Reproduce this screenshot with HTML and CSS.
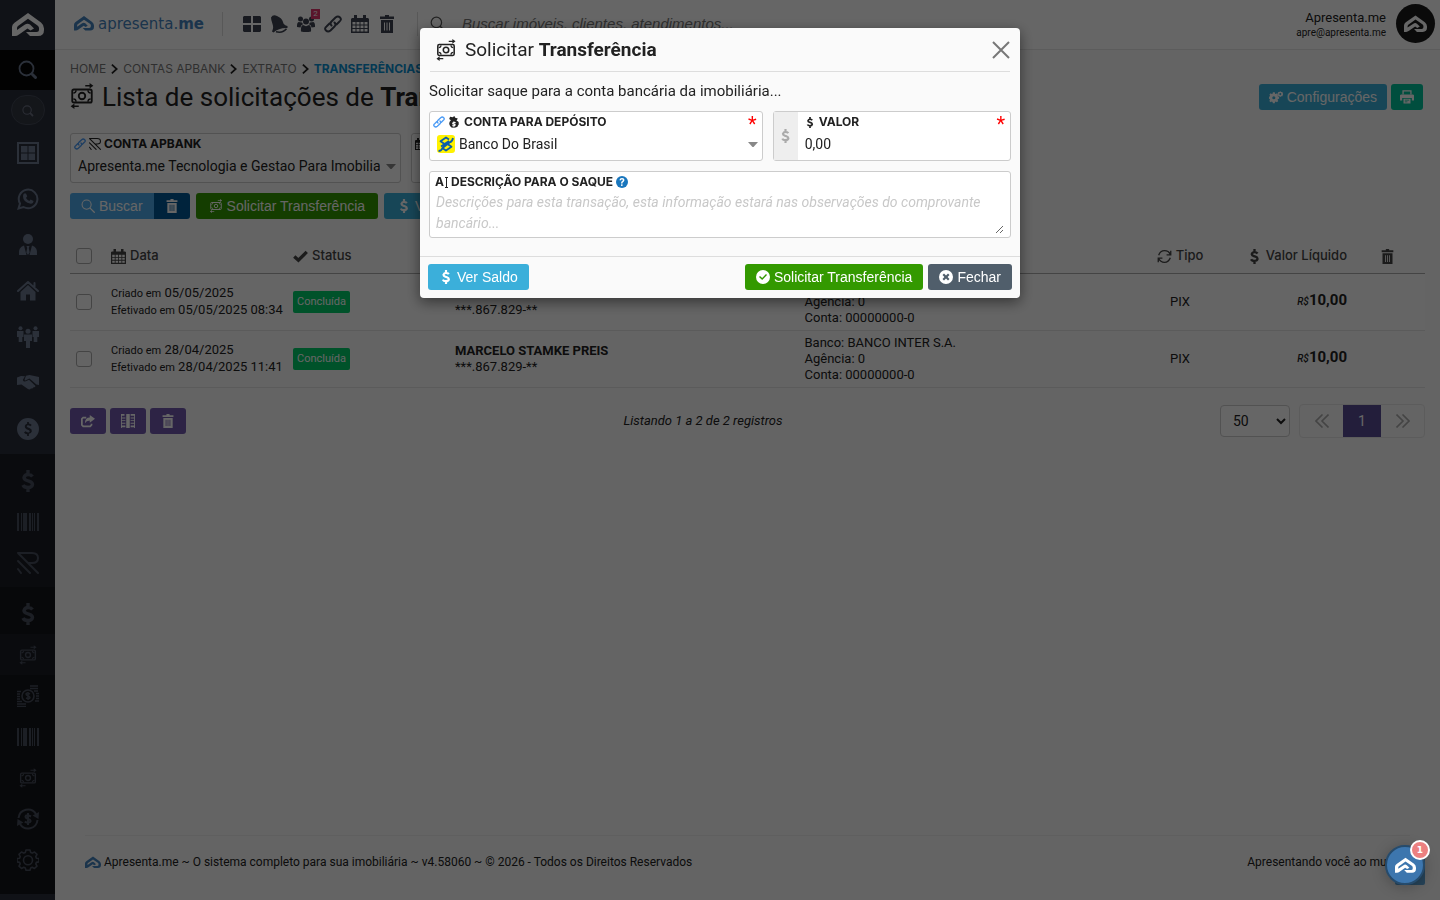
FILE: index.html
```html
<!DOCTYPE html>
<html lang="pt-BR">
<head>
  <meta charset="UTF-8">
  <meta name="viewport" content="width=device-width, initial-scale=1.0">
  <title>Transferências - Apresenta.me</title>
  <link rel="stylesheet" href="styles.css">
</head>
<body>
  <svg class="sprite" aria-hidden="true">
    <symbol id="i-logo" viewBox="0 0 32 24"><path fill="currentColor" d="M16 0 29 9.500Q32 12 32 15.500V17Q32 23 26 23H18L14 19H24.500Q27 19 27 16.500V15Q27 13.500 25.500 12.500L16 5.800 6 13Q5 13.800 5 15V17L13 11.500Q15.500 9.800 18 11.500L22 15.500 18.500 17.500 15.500 15.500 7 21.500Q5 23 3 23H0V14Q0 11.500 2.500 9.700Z"/></symbol>
    <symbol id="i-search" viewBox="0 0 20 20"><circle cx="8.500" cy="8.500" r="7" fill="none" stroke="currentColor" stroke-width="1.800"/><path d="m14.500 14.500 3 3" stroke="currentColor" stroke-width="3" stroke-linecap="round"/></symbol>
    <symbol id="i-search-thin" viewBox="0 0 20 20"><circle cx="8" cy="8" r="6.500" fill="none" stroke="currentColor" stroke-width="1.500"/><path d="m13 13 6 6" stroke="currentColor" stroke-width="1.800" stroke-linecap="round"/></symbol>
    <symbol id="i-window" viewBox="0 0 22 22"><path fill="none" stroke="currentColor" stroke-width="2" d="M1 1h20v20H1z"/><path fill="currentColor" d="M4 4h6.500v6.500H4zM11.500 4H18v6.500h-6.500zM4 11.500h6.500V18H4zM11.500 11.500H18V18h-6.500z"/></symbol>
    <symbol id="i-whats" viewBox="0 0 22 22"><path fill="none" stroke="currentColor" stroke-width="2" d="M1.500 20.500 3 15.500A9.300 9.300 0 1 1 6.500 19Z"/><path fill="currentColor" d="M7 5.500h2l1.200 2.800L9 10q1.200 2.200 3.300 3l1.300-1.500 2.900 1.400q0 2.500-2.700 2.800Q6 14.500 6 8.300 6 6.500 7 5.500Z"/></symbol>
    <symbol id="i-user" viewBox="0 0 20 22"><circle cx="10" cy="5" r="5" fill="currentColor"/><path fill="currentColor" d="M6 11.500 8.500 21H1q-1-8 5-9.500ZM14 11.500 11.500 21H19q1-8-5-9.500ZM8.500 12h3l-.7 2 .9 4.500L10 21l-1.700-2.500.9-4.500Z"/></symbol>
    <symbol id="i-home" viewBox="0 0 22 20"><path fill="none" stroke="currentColor" stroke-width="2" stroke-linecap="round" stroke-linejoin="round" d="m1 10 10-9 10 9M17.500 2v4"/><path fill="currentColor" d="M11 4 3.500 11v8.500h5.500v-6h4v6h5.500V11Z"/></symbol>
    <symbol id="i-people" viewBox="0 0 22 22"><g fill="currentColor"><circle cx="3.500" cy="2.200" r="2"/><circle cx="18.500" cy="2.200" r="2"/><circle cx="11" cy="5.200" r="2.500"/><path d="M0 5h6.500v6H5.300v5H1.700v-5H0zM15.500 5H22v6h-1.700v5h-3.600v-5h-1.200zM7 8.500h8V15h-2v7H9v-7H7z"/></g></symbol>
    <symbol id="i-hands" viewBox="0 0 22 16"><path fill="currentColor" d="M0 2.500 4 1l4 .3L5.800 5q1 2.700 4.200.8l2-1.100 6.500 6.200q-.5 1.800-2 1.300-.8 1.900-2.600 1.200-1.200 1.800-3 .6L4.500 9.500 0 10ZM9 .8 12.500 0l6 1.200L22 2v8l-2.600-.4-7-6.200-4 2.100q-1 0-.8-1.200Z"/></symbol>
    <symbol id="i-coin" viewBox="0 0 22 22"><path fill="currentColor" fill-rule="evenodd" d="M11 0a11 11 0 1 0 0 22 11 11 0 0 0 0-22Zm-.9 4h1.800v1.500q2 .2 2.800 1.500l-1.400 1.300q-1.600-1.500-3.200-.8-.9 1 .4 1.700l2.400 1q2.300 1 1.900 3.300-.5 1.900-2.900 2.300V18h-1.800v-1.700Q8 16 7 14.600l1.500-1.300q1.800 1.700 3.700.9 1.200-1-.2-1.900l-2.500-1Q7.400 10 7.800 8q.5-1.900 2.300-2.300Z"/></symbol>
    <symbol id="i-dollar" viewBox="0 0 12 22"><path fill="none" stroke="currentColor" stroke-width="3.400" d="M10.500 6.500Q9 4.500 6 4.500T2 7.500q0 2 3 3l2.500.8q3 1 3 3.200Q10 17.500 6 17.500T1 15M6 0v5M6 17v5"/></symbol>
    <symbol id="i-barcode" viewBox="0 0 22 18"><path fill="currentColor" d="M0 0h2v18H0zM4 0h1v18H4zM6 0h4v18H6zM12 0h2v18h-2zM15 0h1v18h-1zM17 0h1v18h-1zM20 0h2v18h-2z"/></symbol>
    <symbol id="i-real" viewBox="0 0 22 22"><path fill="none" stroke="currentColor" stroke-width="2" stroke-linecap="round" stroke-linejoin="round" d="M1 1h14q6 0 6 5t-6 5h-4M1 1l20 20M1 9l12 12M1 17l3 4"/></symbol>
    <symbol id="i-cash" viewBox="0 0 22 24"><rect x="2" y="6" width="18" height="12" rx="1.500" fill="none" stroke="currentColor" stroke-width="1.700"/><circle cx="11" cy="12" r="3" fill="none" stroke="currentColor" stroke-width="1.700"/><path fill="none" stroke="currentColor" stroke-width="1.300" d="M3 9.300q2.500 0 2.500-2.500M19 9.300q-2.500 0-2.500-2.500M3 14.700q2.500 0 2.500 2.500M19 14.700q-2.500 0-2.500 2.500M14 2.500h5M8 21.500H3"/><path fill="currentColor" d="m18 0 3.500 2.500L18 5ZM4 19v5l-3.500-2.500Z"/></symbol>
    <symbol id="i-coins" viewBox="0 0 22 22"><circle cx="11" cy="11" r="6" fill="none" stroke="currentColor" stroke-width="1.600"/><path fill="none" stroke="currentColor" stroke-width="1.600" d="M13 1h8M13 3.500h8M17 6h4M19 8.500h3M19 11h3M19 13.500h3M18 16h4M0 6.500h4M0 9h3M0 11.500h3M0 14h3M0 16.500h5M0 19h9M0 21.500h9"/><path fill="none" stroke="currentColor" stroke-width="1.500" d="M13 9q-3.500-2-4 0 0 1 2 1.800t2 2q-.7 1.800-4 .2M11 7v8"/></symbol>
    <symbol id="i-cycle" viewBox="0 0 22 22"><path fill="none" stroke="currentColor" stroke-width="2" d="M1.500 10A9.500 9.500 0 0 1 19 6M20.500 12A9.500 9.500 0 0 1 3 16"/><path fill="currentColor" d="m22 4-.5 7-6-3.500ZM0 18l.5-7 6 3.500Z"/><path fill="none" stroke="currentColor" stroke-width="2" d="M14 8.500q-5-2.500-5.500 0 0 1.500 2.500 2.300t2.700 2.300q-.7 2.700-6 .6M11 5v12"/></symbol>
    <symbol id="i-gear" viewBox="0 0 22 22"><path fill="none" stroke="currentColor" stroke-width="1.600" stroke-linejoin="round" d="M9 1h4l.7 2.500 1.500.6L17.500 3 20 5.300l-1.200 2.400.6 1.500L22 9.500v3.400l-2.600.5-.6 1.500L20 17.200 17.400 19.500l-2.200-1.200-1.500.6L13 21.300H9l-.7-2.400-1.500-.6-2.300 1.200L2 17.200l1.200-2.300-.6-1.500L0 12.900V9.500l2.600-.3.600-1.500L2 5.300 4.500 3l2.300 1.100 1.500-.6Z"/><circle cx="11" cy="11.200" r="4.500" fill="none" stroke="currentColor" stroke-width="1.600"/></symbol>
    <symbol id="i-tiles" viewBox="0 0 18 16"><path fill="currentColor" d="M1 0h7v7H0V1zM10 0h7l1 1v6h-8zM0 9h8v7H1l-1-1zM10 9h8v6l-1 1h-7z"/></symbol>
    <symbol id="i-bell" viewBox="0 0 18 18"><path fill="currentColor" d="M1 2.500Q3-1 7 1q5 2 6 6 .5 3 4.500 4v2Q9 12.500 3.500 17.500L2 16.500Q4 13 2.500 9 1 5 1 2.500Z"/><path fill="none" stroke="currentColor" stroke-width="1.500" d="M6 16.800q7 1.500 10.500-3"/></symbol>
    <symbol id="i-group" viewBox="0 0 18 16"><g fill="currentColor"><circle cx="9" cy="5.500" r="3"/><circle cx="3.500" cy="3" r="2.500"/><circle cx="14.500" cy="3" r="2.500"/><path d="M4 15.500Q3.500 10 6 9l3 1.200L12 9q2.500 1 2 6.500-5 1-10 0ZM0 11Q-.3 7 1.500 6L5 6.500l1 1.700Q3.500 9 3.500 11.500ZM18 11q.3-4-1.500-5l-3.500.5-1 1.700q2.500.8 2.500 3.300Z"/></g></symbol>
    <symbol id="i-link" viewBox="0 0 18 18"><path fill="none" stroke="currentColor" stroke-width="2" stroke-linecap="round" d="M7.500 10.500q-2-2 0-4l4-4Q14 .500 16 2.500T15.500 6.500l-3 3M10.500 7.500q2 2 0 4l-4 4Q4 17.500 2 15.500T2.500 11.500l3-3"/></symbol>
    <symbol id="i-cal" viewBox="0 0 18 18"><path fill="currentColor" fill-rule="evenodd" d="M1 3h2V0h3v3h6V0h3v3h2l1 1v14H0V4ZM1.500 7v2.500h3V7Zm4 0v2.500h3V7Zm4 0v2.500h3V7Zm4 0v2.500h3V7Zm-12 3.500V13h3v-2.500Zm4 0V13h3v-2.500Zm4 0V13h3v-2.500Zm4 0V13h3v-2.500ZM1.500 14v2.500h3V14Zm4 0v2.500h3V14Zm4 0v2.500h3V14Zm4 0v2.500h3V14Z"/></symbol>
    <symbol id="i-trash" viewBox="0 0 14 18"><path fill="currentColor" fill-rule="evenodd" d="M5 0h4v1.500h5V4H0V1.500h5ZM1 5h12v13H1Zm3 2.500v8h1v-8Zm2.500 0v8h1v-8Zm2.500 0v8h1v-8Z"/></symbol>
    <symbol id="i-check" viewBox="0 0 18 14"><path fill="none" stroke="currentColor" stroke-width="4" d="m1.500 7 5 4.500L16.500 1.500"/></symbol>
    <symbol id="i-sync" viewBox="0 0 18 18"><path fill="none" stroke="currentColor" stroke-width="1.600" d="M2 7.500Q4 2 9 2t7 4.500M16 10.500Q14 16 9 16t-7-4.500M16.500 2v5h-5M1.500 16v-5h5"/></symbol>
    <symbol id="i-gears" viewBox="0 0 18 14"><path fill="currentColor" fill-rule="evenodd" d="M5 1h2.400l.4 1.700 1 .5 1.500-.9L12 4l-.9 1.500.4 1 1.500.4v2.300l-1.500.4-.5 1 .9 1.500-1.700 1.700-1.500-.9-1 .5L7.400 15H5l-.4-1.600-1-.5-1.500.9L.400 12.100l.9-1.500-.4-1L-.500 9.200V6.900L.900 6.500l.5-1L.500 4l1.600-1.700 1.500.9 1-.5ZM6.200 6a2 2 0 1 0 0 4 2 2 0 0 0 0-4ZM14.500-.500l1.200 1.100 1.600-.1.300 1.600 1 1.200-1 1.200-.3 1.500-1.600.1-1.200 1-1.300-1-1.500-.1.100-1.600-1-1.100 1-1.200-.1-1.600 1.600.1Zm0 2.500a1.300 1.300 0 1 0 0 2.600 1.300 1.300 0 0 0 0-2.600Z"/></symbol>
    <symbol id="i-print" viewBox="0 0 16 16"><path fill="none" stroke="currentColor" stroke-width="1.500" d="M3.500 5V1h9v4"/><path fill="currentColor" fill-rule="evenodd" d="M1 5h14l1 1v6h-2.500V9h-11v3H0V6Zm3 5h8v5.500H4Zm1.500 1v1h5v-1Zm0 2v1h3v-1Z"/></symbol>
    <symbol id="i-share" viewBox="0 0 16 14"><path fill="none" stroke="currentColor" stroke-width="2" d="M6 3H2.500L1 4.500v7L2.500 13h8l1.500-1.500V10"/><path fill="currentColor" d="M10 0l6 4.500L10 9V6.500Q6 6.500 4.500 9.500 4.500 3 10 3Z"/></symbol>
    <symbol id="i-sheet" viewBox="0 0 16 16"><path fill="currentColor" d="M1 0h3v2H1zM1 4h4v1H1zM1 7h4v1H1zM1 10h4v1H1zM1 13h4v2H1zM6 0h4v16H6zM11 0h4v2h-4zM11 4h4v1h-4zM11 7h4v1h-4zM11 10h4v1h-4zM11 13h4v2h-4zM0 0h1v16H0zM15 0h1v16h-1z"/></symbol>
    <symbol id="i-bag" viewBox="0 0 12 14"><path fill="currentColor" fill-rule="evenodd" d="m2 1 3 .5L7 0l1 2 3 1-1.500 2.500L11 6q1.500 1 1 2.500.5 1.500-.8 2.500-.2 2-2 2-5 2-7-1Q-.500 8 3 5L1 3.500Zm4 5v1L4.500 8v1.500l2.500 1-2.500.300V12h1.500v1h1v-1L8.500 11V9.500L6 8.500h2.500V7H7V6Z"/></symbol>
    <symbol id="i-caret" viewBox="0 0 10 6"><path fill="currentColor" d="M0 0h10L6 4.500Q5 5.500 4 4.500Z"/></symbol>
    <symbol id="i-chev" viewBox="0 0 8 12"><path fill="none" stroke="currentColor" stroke-width="2" d="m1 1 5.500 5L1 11"/></symbol>
    <symbol id="i-prev" viewBox="0 0 14 14"><path fill="none" stroke="currentColor" stroke-width="1.600" d="M7.500.500 1 7l6.500 6.500M13.500.500 7 7l6.500 6.500"/></symbol>
    <symbol id="i-next" viewBox="0 0 14 14"><path fill="none" stroke="currentColor" stroke-width="1.600" d="M.500.500 7 7 .500 13.500M6.500.500 13 7l-6.500 6.500"/></symbol>
    <symbol id="i-x" viewBox="0 0 18 18"><path fill="none" stroke="currentColor" stroke-width="2" d="m1 1 16 16M17 1 1 17"/></symbol>
    <symbol id="i-ok" viewBox="0 0 14 14"><path fill="currentColor" fill-rule="evenodd" d="M7 0a7 7 0 1 0 0 14A7 7 0 0 0 7 0Zm-4 7 1-1 2.200 2L10 4l1 1-4.800 5Z"/></symbol>
    <symbol id="i-no" viewBox="0 0 14 14"><path fill="currentColor" fill-rule="evenodd" d="M7 0a7 7 0 1 0 0 14A7 7 0 0 0 7 0ZM5 3.500 7 5.400l2-1.900L10.500 5 8.600 7l1.900 2L9 10.500 7 8.600l-2 1.900L3.500 9l1.900-2-1.900-2Z"/></symbol>
    <symbol id="i-bb" viewBox="0 0 18 18"><rect width="18" height="18" rx="3" fill="#fff200"/><path fill="none" stroke="#0b5ea8" stroke-width="1.800" stroke-linejoin="round" d="M7.500 9 3.500 6.200 9 2.500l3 2M10.500 9l4 2.800-5.500 3.700-3-2M1.500 16q3 0 4-3l7-5.500q3-1 3.500-4.500M4 11.500l8-5.500M14 6.500 6 12"/></symbol>
  </svg>

  <div class="app">
    <aside class="sidebar">
      <a href="#" class="side-logo" aria-label="Apresenta.me"><svg><use href="#i-logo"/></svg></a>
      <a href="#" class="side-search" aria-label="Buscar"><svg><use href="#i-search"/></svg></a>
      <div class="side-round"><button type="button" aria-label="Buscar no menu"><svg><use href="#i-search"/></svg></button></div>
      <nav class="side-menu">
        <a href="#" aria-label="Painel"><svg><use href="#i-window"/></svg></a>
        <a href="#" aria-label="WhatsApp"><svg><use href="#i-whats"/></svg></a>
        <a href="#" aria-label="Clientes"><svg><use href="#i-user"/></svg></a>
        <a href="#" aria-label="Imóveis"><svg><use href="#i-home"/></svg></a>
        <a href="#" aria-label="Equipe"><svg><use href="#i-people"/></svg></a>
        <a href="#" aria-label="Negócios"><svg><use href="#i-hands"/></svg></a>
        <a href="#" aria-label="Financeiro"><svg><use href="#i-coin"/></svg></a>
      </nav>
      <nav class="side-sub">
        <a href="#" aria-label="Contas"><svg><use href="#i-dollar"/></svg></a>
        <a href="#" aria-label="Boletos"><svg class="bars"><use href="#i-barcode"/></svg></a>
        <a href="#" aria-label="Apbank"><svg><use href="#i-real"/></svg></a>
      </nav>
      <nav class="side-sub side-deep">
        <a href="#" aria-label="Extrato"><svg><use href="#i-dollar"/></svg></a>
        <a href="#" class="active" aria-label="Transferências"><svg class="cash"><use href="#i-cash"/></svg></a>
        <a href="#" aria-label="Cobranças"><svg><use href="#i-coins"/></svg></a>
        <a href="#" aria-label="Pagamentos"><svg class="bars"><use href="#i-barcode"/></svg></a>
        <a href="#" aria-label="Saques"><svg class="cash"><use href="#i-cash"/></svg></a>
        <a href="#" aria-label="Recorrências"><svg><use href="#i-cycle"/></svg></a>
        <a href="#" aria-label="Configurações"><svg><use href="#i-gear"/></svg></a>
      </nav>
    </aside>

    <div class="page">
      <header class="topbar">
        <a href="#" class="brand"><svg><use href="#i-logo"/></svg><span>apresenta.<b>me</b></span></a>
        <nav class="shortcuts">
          <a href="#" aria-label="Painel"><svg><use href="#i-tiles"/></svg></a>
          <a href="#" aria-label="Avisos"><svg><use href="#i-bell"/></svg></a>
          <a href="#" aria-label="Leads"><svg><use href="#i-group"/></svg><span class="count">2</span></a>
          <a href="#" aria-label="Links"><svg><use href="#i-link"/></svg></a>
          <a href="#" aria-label="Agenda"><svg><use href="#i-cal"/></svg></a>
          <a href="#" aria-label="Lixeira"><svg><use href="#i-trash"/></svg></a>
        </nav>
        <label class="top-search"><svg><use href="#i-search-thin"/></svg><input type="text" aria-label="Buscar" placeholder="Buscar imóveis, clientes, atendimentos..."></label>
        <div class="account">
          <p>Apresenta.me<small>apre@apresenta.me</small></p>
          <span class="avatar"><svg><use href="#i-logo"/></svg></span>
        </div>
      </header>

      <main class="content">
        <nav class="crumbs">
          <a href="#">HOME</a><svg><use href="#i-chev"/></svg>
          <a href="#">CONTAS APBANK</a><svg><use href="#i-chev"/></svg>
          <a href="#">EXTRATO</a><svg><use href="#i-chev"/></svg>
          <b>TRANSFERÊNCIAS</b>
        </nav>
        <div class="title-row">
          <h1><svg><use href="#i-cash"/></svg><span>Lista de solicitações de <b>Transferência</b></span></h1>
          <div class="actions">
            <button type="button" class="btn cyan"><svg><use href="#i-gears"/></svg>Configurações</button>
            <button type="button" class="btn teal" aria-label="Imprimir"><svg><use href="#i-print"/></svg></button>
          </div>
        </div>

        <form class="filters">
          <div class="field">
            <label for="conta"><svg class="blue"><use href="#i-link"/></svg><svg><use href="#i-real"/></svg>CONTA APBANK</label>
            <select id="conta"><option>Apresenta.me Tecnologia e Gestao Para Imobiliarias</option></select>
            <svg class="caret"><use href="#i-caret"/></svg>
          </div>
          <div class="field">
            <label for="periodo"><svg><use href="#i-cal"/></svg>PERÍODO</label>
            <input id="periodo" type="text">
          </div>
        </form>
        <div class="toolbar">
          <div class="pair">
            <button type="button" class="btn blue-btn"><svg><use href="#i-search-thin"/></svg>Buscar</button>
            <button type="button" class="btn navy" aria-label="Limpar"><svg><use href="#i-trash"/></svg></button>
          </div>
          <button type="button" class="btn green"><svg><use href="#i-cash"/></svg>Solicitar Transferência</button>
          <button type="button" class="btn cyan"><svg><use href="#i-dollar"/></svg>Ver Saldo</button>
        </div>

        <table class="list">
          <thead>
            <tr>
              <th class="c-check"><input type="checkbox" aria-label="Selecionar todos"></th>
              <th class="c-date"><svg><use href="#i-cal"/></svg>Data</th>
              <th class="c-status"><svg><use href="#i-check"/></svg>Status</th>
              <th>Favorecido</th>
              <th>Banco</th>
              <th class="c-type"><svg><use href="#i-sync"/></svg>Tipo</th>
              <th class="c-value"><svg><use href="#i-dollar"/></svg>Valor Líquido</th>
              <th class="c-trash"><svg><use href="#i-trash"/></svg></th>
            </tr>
          </thead>
          <tbody>
            <tr>
              <td class="c-check"><input type="checkbox" aria-label="Selecionar"></td>
              <td><small>Criado em</small> 05/05/2025<br><small>Efetivado em</small> 05/05/2025 08:34</td>
              <td><span class="tag">Concluída</span></td>
              <td><b>MARCELO STAMKE PREIS</b><br>***.867.829-**</td>
              <td>Banco: BANCO INTER S.A.<br>Agência: 0<br>Conta: 00000000-0</td>
              <td class="c-type">PIX</td>
              <td class="c-value"><i>R$</i><b>10,00</b></td>
              <td></td>
            </tr>
            <tr>
              <td class="c-check"><input type="checkbox" aria-label="Selecionar"></td>
              <td><small>Criado em</small> 28/04/2025<br><small>Efetivado em</small> 28/04/2025 11:41</td>
              <td><span class="tag">Concluída</span></td>
              <td><b>MARCELO STAMKE PREIS</b><br>***.867.829-**</td>
              <td>Banco: BANCO INTER S.A.<br>Agência: 0<br>Conta: 00000000-0</td>
              <td class="c-type">PIX</td>
              <td class="c-value"><i>R$</i><b>10,00</b></td>
              <td></td>
            </tr>
          </tbody>
        </table>

        <div class="list-foot">
          <div class="bulk">
            <button type="button" class="btn purple" aria-label="Exportar"><svg><use href="#i-share"/></svg></button>
            <button type="button" class="btn purple" aria-label="Planilha"><svg><use href="#i-sheet"/></svg></button>
            <button type="button" class="btn purple" aria-label="Excluir"><svg><use href="#i-trash"/></svg></button>
          </div>
          <em>Listando 1 a 2 de 2 registros</em>
          <div class="paging">
            <select aria-label="Registros por página"><option>50</option><option>100</option></select>
            <div class="pages">
              <a href="#" aria-label="Anterior"><svg><use href="#i-prev"/></svg></a>
              <a href="#" class="current">1</a>
              <a href="#" aria-label="Próxima"><svg><use href="#i-next"/></svg></a>
            </div>
          </div>
        </div>
      </main>

      <footer class="footer">
        <span><svg><use href="#i-logo"/></svg>Apresenta.me ~ O sistema completo para sua imobiliária ~ v4.58060 ~ © 2026 - Todos os Direitos Reservados</span>
        <span>Apresentando você ao mundo!</span>
      </footer>
    </div>
  </div>

  <a href="#" class="to-top" aria-label="Voltar ao topo"></a>
  <div class="backdrop"></div>

  <div class="modal" role="dialog" aria-labelledby="modal-title">
    <div class="modal-head">
      <h2 id="modal-title"><svg><use href="#i-cash"/></svg><span>Solicitar <b>Transferência</b></span></h2>
      <button type="button" class="close" aria-label="Fechar"><svg><use href="#i-x"/></svg></button>
    </div>
    <form class="modal-body" id="saque">
      <p>Solicitar saque para a conta bancária da imobiliária...</p>
      <div class="row">
        <div class="field">
          <label for="deposito"><svg class="blue"><use href="#i-link"/></svg><svg class="bag"><use href="#i-bag"/></svg>CONTA PARA DEPÓSITO</label>
          <div class="bank">
            <svg><use href="#i-bb"/></svg>
            <select id="deposito"><option>Banco Do Brasil</option></select>
          </div>
          <span class="required">*</span>
          <svg class="caret"><use href="#i-caret"/></svg>
        </div>
        <div class="field money">
          <span class="addon"><svg><use href="#i-dollar"/></svg></span>
          <div class="money-box">
            <label for="valor"><svg class="usd"><use href="#i-dollar"/></svg>VALOR</label>
            <input id="valor" type="text" value="0,00">
          </div>
          <span class="required">*</span>
        </div>
      </div>
      <div class="field area">
        <label for="descricao"><span class="ai">A<i></i></span>DESCRIÇÃO PARA O SAQUE<span class="help">?</span></label>
        <textarea id="descricao" rows="2" placeholder="Descrições para esta transação, esta informação estará nas observações do comprovante bancário..."></textarea>
      </div>
    </form>
    <div class="modal-foot">
      <button type="button" class="btn cyan"><svg><use href="#i-dollar"/></svg>Ver Saldo</button>
      <div>
        <button type="submit" form="saque" class="btn green"><svg><use href="#i-ok"/></svg>Solicitar Transferência</button>
        <button type="button" class="btn slate"><svg><use href="#i-no"/></svg>Fechar</button>
      </div>
    </div>
  </div>

  <button type="button" class="chat" aria-label="Abrir chat"><svg><use href="#i-logo"/></svg><span>1</span></button>
</body>
</html>
```
FILE: styles.css
```css
* {
  box-sizing: border-box;
}
body {
  margin: 0;
  font-family: Roboto, sans-serif;
  font-size: 13px;
  line-height: 16px;
  color: #222;
  background: #fafafa;
}
a {
  color: inherit;
  text-decoration: none;
}
p, h1, h2 {
  margin: 0;
}
svg {
  flex: none;
  overflow: visible;
}
.sprite {
  position: absolute;
  width: 0;
  height: 0;
}
.app {
  display: flex;
  min-height: 100vh;
}

/* sidebar */
.sidebar {
  flex: none;
  width: 55px;
  background: #2a2e3a;
  color: #6b7890;
}
.sidebar a, .side-round {
  display: flex;
  align-items: center;
  justify-content: center;
}
.sidebar svg {
  width: 22px;
  height: 22px;
}
.sidebar .side-logo {
  height: 50px;
  color: #fff;
}
.sidebar .side-logo svg {
  width: 32px;
  height: 24px;
}
.side-search {
  height: 40px;
  background: #050505;
}
.sidebar .side-search svg {
  width: 20px;
  height: 20px;
}
.side-round {
  height: 40px;
}
.side-round button {
  width: 34px;
  height: 30px;
  padding: 0;
  border: 1px solid #444a58;
  border-radius: 15px;
  background: #323743;
  color: #6b7080;
}
.sidebar .side-round svg {
  width: 12px;
  height: 12px;
  vertical-align: middle;
}
.side-menu a {
  height: 46px;
}
.side-sub {
  margin-top: 2px;
  padding: 6px 0 4px;
  background: #1a1d25;
  color: #484e5c;
}
.side-sub a {
  height: 41px;
}
.side-deep {
  margin-top: 0;
  padding-bottom: 14px;
  background: #131419;
}
.side-deep .active {
  background: #1a1d25;
}
.sidebar .bars {
  height: 18px;
}
.sidebar .cash {
  width: 18px;
  height: 20px;
}

/* top bar */
.page {
  flex: 1;
  min-width: 0;
  display: flex;
  flex-direction: column;
}
.topbar {
  display: flex;
  align-items: center;
  height: 50px;
  padding: 0 5px 2px 19px;
  border-bottom: 1px solid #e6e6e6;
  background: #fff;
}
.brand {
  display: flex;
  align-items: center;
  gap: 4px;
  padding-right: 18px;
  font-family: "DejaVu Sans", sans-serif;
  font-size: 15px;
  color: #4583bd;
}
.brand svg {
  width: 20px;
  height: 15px;
}
.shortcuts {
  display: flex;
  gap: 9px;
  padding: 3px 21px 3px 20px;
  border: solid #ddd;
  border-width: 0 1px;
  color: #3c4250;
}
.shortcuts a {
  position: relative;
  display: flex;
}
.shortcuts svg {
  width: 18px;
  height: 18px;
}
.count {
  position: absolute;
  top: -6px;
  right: -5px;
  width: 9px;
  height: 10px;
  background: #e0356b;
  color: #fff;
  font-size: 8px;
  line-height: 10px;
  text-align: center;
}
.top-search {
  flex: 1;
  display: flex;
  align-items: center;
  gap: 14px;
  padding-left: 12px;
  color: #555;
}
.top-search svg {
  width: 16px;
  height: 16px;
}
.top-search input {
  flex: 1;
  border: 0;
  outline: 0;
  background: none;
  font-family: "Liberation Sans", sans-serif;
  font-size: 15px;
}
.top-search input::placeholder {
  color: #777;
  font-style: italic;
}
.account {
  display: flex;
  gap: 10px;
  text-align: right;
}
.account p {
  padding-top: 6px;
}
.account small {
  display: block;
  font-size: 10px;
  line-height: 13px;
}
.avatar {
  display: flex;
  align-items: center;
  justify-content: center;
  width: 39px;
  height: 39px;
  border-radius: 50%;
  background: #1a1a1a;
  color: #fff;
}
.avatar svg {
  width: 23px;
  height: 18px;
}

/* page heading */
.content {
  flex: 1;
  padding: 11px 15px;
}
.crumbs {
  display: flex;
  align-items: center;
  gap: 5px;
  font-family: Inter, sans-serif;
  font-size: 12px;
  color: #777;
}
.crumbs svg {
  width: 7px;
  height: 12px;
  color: #222;
}
.crumbs b {
  color: #0a8ed0;
}
.title-row {
  display: flex;
  align-items: center;
  justify-content: space-between;
  height: 40px;
  padding-right: 2px;
}
h1 {
  display: flex;
  gap: 8px;
  font-size: 26px;
  line-height: 40px;
  font-weight: 400;
}
h1 svg {
  width: 24px;
  height: 26px;
  margin-top: 6px;
}
.actions, .toolbar, .bulk {
  display: flex;
  gap: 4px;
}
.btn {
  display: flex;
  align-items: center;
  justify-content: center;
  gap: 4px;
  min-width: 32px;
  height: 26px;
  padding: 0 10px;
  border: 0;
  border-radius: 3px;
  color: #fff;
  font-family: "Liberation Sans", sans-serif;
  font-size: 14px;
}
.btn svg {
  width: 14px;
  height: 14px;
}
.actions .teal {
  padding: 0 9px;
}
.cyan {
  background: #3bafda;
}
.teal {
  background: #00c29c;
}
.green {
  background: #339900;
}
.blue-btn {
  background: #4fabea;
}
.navy {
  background: #005897;
}
.purple {
  background: #7058ad;
}
.slate {
  background: #505e6b;
}

/* form fields */
.filters {
  display: grid;
  grid-template-columns: repeat(4, 1fr);
  gap: 10px;
  margin-top: 16px;
}
.field {
  position: relative;
  min-width: 0;
  height: 50px;
  border: 1px solid #ccc;
  border-radius: 3px;
  background: #fff;
}
.field label {
  display: flex;
  align-items: center;
  gap: 3px;
  height: 20px;
  padding-left: 3px;
  font-family: Inter, sans-serif;
  font-size: 12px;
  font-weight: 700;
}
.field label svg {
  width: 12px;
  height: 12px;
}
.field .blue {
  color: #4d9cf5;
}
.field select, .field input, .field textarea {
  display: block;
  width: 100%;
  margin: 0;
  padding: 0 20px 0 7px;
  border: 0;
  outline: 0;
  appearance: none;
  background: none;
  font-family: Roboto, sans-serif;
  font-size: 14px;
  line-height: 24px;
  color: #222;
}
.caret {
  position: absolute;
  right: 4px;
  bottom: 12px;
  width: 10px;
  height: 6px;
  color: #888;
}
.toolbar {
  gap: 6px;
  margin-top: 10px;
}
.toolbar .btn {
  padding: 0 13px;
}
.pair {
  display: flex;
}
.toolbar .blue-btn {
  padding: 0 11px;
  border-radius: 3px 0 0 3px;
}
.pair .navy {
  width: 36px;
  padding: 0 11px;
  border-radius: 0 3px 3px 0;
}

/* list */
.list {
  width: 100%;
  margin-top: 20px;
  table-layout: fixed;
  border-collapse: collapse;
}
.list th {
  height: 34px;
  padding: 0 7px;
  border-bottom: 1px solid #aaa;
  font-family: Inter, sans-serif;
  font-size: 13px;
  font-weight: 500;
  text-align: left;
  white-space: nowrap;
  color: #444;
}
.list th svg {
  width: 15px;
  height: 15px;
  margin-right: 4px;
  vertical-align: middle;
}
.list td {
  height: 57px;
  padding: 4px 7px;
  border-bottom: 1px solid #e4e4e4;
  white-space: nowrap;
}
.list tbody tr:nth-child(odd) {
  background: #fdfdfd;
}
.list small {
  font-size: 11px;
}
.list .c-check {
  width: 34px;
  padding: 0 6px;
}
.c-date {
  width: 182px;
}
.c-status {
  width: 162px;
}
.list .c-type {
  width: 66px;
  padding: 0;
  text-align: center;
}
.list .c-value {
  width: 141px;
  text-align: right;
}
.list .c-trash {
  width: 71px;
  text-align: center;
}
.list td.c-value {
  padding: 0 7px 2px;
  font-size: 15px;
}
.c-value i {
  font-size: 10px;
  font-weight: 500;
}
input[type=checkbox] {
  display: block;
  width: 16px;
  height: 16px;
  margin: 0;
  border: 1px solid #aaa;
  border-radius: 3px;
  appearance: none;
}
.tag {
  display: inline-block;
  padding: 3px 4px;
  border-radius: 2px;
  background: #00cc6a;
  color: #fff;
  font-size: 11px;
}
.list-foot {
  display: flex;
  align-items: center;
  justify-content: space-between;
  margin-top: 16px;
}
.bulk .btn {
  width: 36px;
}
.paging {
  display: flex;
  align-items: center;
  gap: 9px;
}
.paging select {
  width: 70px;
  height: 32px;
  padding: 0 8px;
  border: 1px solid #ccc;
  border-radius: 4px;
  background: #fff;
  font-family: Roboto, sans-serif;
  font-size: 14px;
  color: #222;
}
.pages {
  display: flex;
  border: 1px solid #e6e6e6;
  border-radius: 4px;
}
.pages a {
  display: flex;
  align-items: center;
  justify-content: center;
  width: 43px;
  height: 32px;
  color: #aaa;
}
.pages svg {
  width: 14px;
  height: 14px;
}
.pages .current {
  width: 38px;
  background: #594c94;
  color: #fff;
  font-size: 14px;
}

.footer {
  display: flex;
  justify-content: space-between;
  margin: 0 30px;
  padding: 18px 0 30px;
  border-top: 1px solid #eee;
  font-size: 12px;
}
.footer svg {
  width: 16px;
  height: 13px;
  margin-right: 3px;
  vertical-align: middle;
  color: #4583bd;
}
.to-top {
  position: fixed;
  right: 15px;
  bottom: 15px;
  width: 30px;
  height: 30px;
  border-radius: 2px;
  background: #5fa8dc;
}
.backdrop {
  position: fixed;
  inset: 0;
  background: rgba(0, 0, 0, 0.6);
}

/* modal */
.modal {
  position: fixed;
  top: 28px;
  left: 50%;
  width: 600px;
  max-width: 100%;
  transform: translateX(-50%);
  border-radius: 4px;
  background: #fafafa;
  box-shadow: 0 4px 14px rgba(0, 0, 0, 0.5);
}
.modal-head {
  display: flex;
  align-items: center;
  justify-content: space-between;
  height: 44px;
  margin: 0 10px;
  border-bottom: 1px solid #ddd;
}
h2 {
  display: flex;
  align-items: center;
  gap: 9px;
  padding-left: 6px;
  font-size: 19px;
  font-weight: 400;
}
h2 svg {
  width: 20px;
  height: 22px;
}
.close {
  display: flex;
  padding: 0;
  border: 0;
  background: none;
  color: #777;
}
.close svg {
  width: 18px;
  height: 18px;
}
.modal-body {
  padding: 9px 9px 18px;
}
.modal-body p {
  padding-bottom: 10px;
  font-size: 15px;
  line-height: 20px;
}
.row {
  display: grid;
  grid-template-columns: 7fr 5fr;
  gap: 10px;
}
.field label .bag {
  width: 11px;
  height: 12px;
  margin-right: 2px;
}
.bank {
  display: flex;
  align-items: center;
  padding-left: 7px;
}
.bank svg {
  width: 18px;
  height: 18px;
}
.field .bank select {
  padding-left: 4px;
}
.money {
  display: flex;
}
.addon {
  display: flex;
  align-items: center;
  justify-content: center;
  width: 24px;
  background: #eee;
  color: #aaa;
}
.addon svg {
  width: 9px;
  height: 14px;
}
.money-box {
  flex: 1;
  min-width: 0;
}
.money label {
  padding-left: 7px;
}
.field label .usd {
  width: 10px;
  height: 11px;
  margin-right: 1px;
}
.required {
  position: absolute;
  top: 2px;
  right: 5px;
  color: #f00;
  font-size: 20px;
  line-height: 20px;
}
.field.area {
  height: auto;
  margin-top: 10px;
  padding: 0 6px 3px 2px;
}
.ai {
  display: flex;
  align-items: center;
  gap: 1px;
}
.ai i {
  width: 3px;
  height: 11px;
  border: solid #222;
  border-width: 1px 0;
  background: linear-gradient(#222, #222) center / 1px 100% no-repeat;
}
.help {
  width: 12px;
  height: 12px;
  border-radius: 50%;
  background: #1976bd;
  color: #fff;
  font-size: 10px;
  line-height: 12px;
  text-align: center;
}
.field textarea {
  height: 42px;
  padding: 0 0 0 4px;
  line-height: 21px;
  overflow: hidden;
  resize: vertical;
}
.field textarea::placeholder {
  color: #c8c8c8;
  font-style: italic;
}
.modal-foot {
  display: flex;
  justify-content: space-between;
  padding: 7px 8px 8px;
  border-top: 1px solid #ddd;
}
.modal-foot div {
  display: flex;
  gap: 5px;
}
.modal-foot .btn {
  padding: 0 11px;
}

/* chat bubble */
.chat {
  position: fixed;
  right: 15px;
  bottom: 15px;
  display: flex;
  align-items: center;
  justify-content: center;
  width: 40px;
  height: 40px;
  padding: 0;
  border: 2px solid #264b6c;
  border-radius: 50%;
  background: #3d76ae;
  color: #fff;
  box-shadow: 0 2px 14px rgba(0, 0, 0, 0.25);
}
.chat svg {
  width: 21px;
  height: 17px;
}
.chat span {
  position: absolute;
  top: -7px;
  right: -7px;
  width: 20px;
  height: 20px;
  border: 2px solid #fff;
  border-radius: 50%;
  background: #ec8080;
  font: bold 9px/16px "DejaVu Sans", sans-serif;
}
```
